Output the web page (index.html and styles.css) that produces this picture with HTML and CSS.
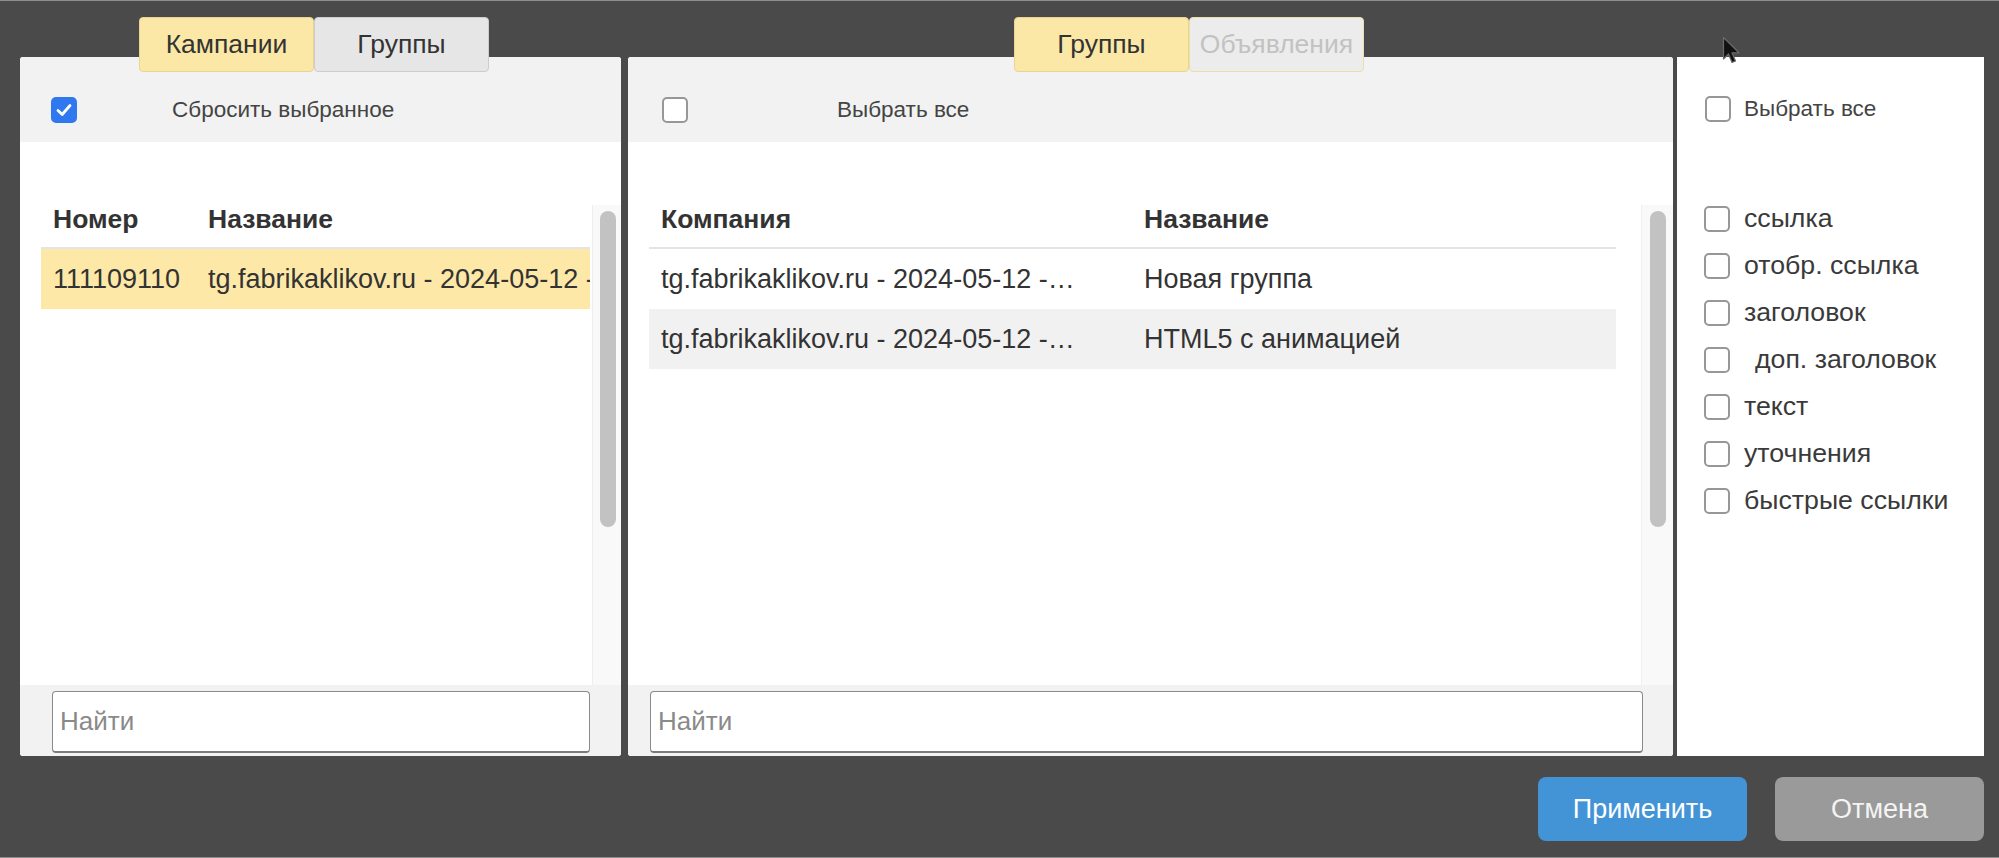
FILE: index.html
```html
<!DOCTYPE html>
<html lang="ru">
<head>
<meta charset="utf-8">
<title>Выбор объявлений</title>
<link rel="stylesheet" href="styles.css">
</head>
<body>
<div class="screen">
  <div class="columns">
    <section class="col col-left">
      <div class="tabs tabs-left">
        <div class="tab tab-active">Кампании</div>
        <div class="tab tab-idle">Группы</div>
      </div>
      <div class="panel">
        <div class="panel-head head-left">
          <span class="cb cb-checked"><svg width="18" height="18" viewBox="0 0 18 18"><path d="M3 9.5 L7.2 13.5 L15 4.5" fill="none" stroke="#fff" stroke-width="2.8" stroke-linecap="round" stroke-linejoin="round"/></svg></span>
          <span class="head-label">Сбросить выбранное</span>
        </div>
        <div class="panel-body">
          <div class="scroll-area">
            <div class="table-wrap tw-left">
              <div class="trow thead"><div class="cell c-num">Номер</div><div class="cell c-name">Название</div></div>
              <div class="trow tr row-sel"><div class="cell c-num">111109110</div><div class="cell c-name">tg.fabrikaklikov.ru - 2024-05-12 -</div></div>
            </div>
            <div class="scrollbar sb-left"><div class="thumb"></div></div>
          </div>
          <div class="search-bar search-left"><input class="search" type="text" placeholder="Найти"></div>
        </div>
      </div>
    </section>

    <section class="col col-mid">
      <div class="tabs tabs-mid">
        <div class="tab tab-active">Группы</div>
        <div class="tab tab-disabled">Объявления</div>
      </div>
      <div class="panel">
        <div class="panel-head head-mid">
          <span class="cb"></span>
          <span class="head-label">Выбрать все</span>
        </div>
        <div class="panel-body">
          <div class="scroll-area">
            <div class="table-wrap tw-mid">
              <div class="trow thead"><div class="cell c-company">Компания</div><div class="cell c-name">Название</div></div>
              <div class="trow tr"><div class="cell c-company">tg.fabrikaklikov.ru - 2024-05-12 -…</div><div class="cell c-name">Новая группа</div></div>
              <div class="trow tr row-hover"><div class="cell c-company">tg.fabrikaklikov.ru - 2024-05-12 -…</div><div class="cell c-name">HTML5 с анимацией</div></div>
            </div>
            <div class="scrollbar sb-mid"><div class="thumb"></div></div>
          </div>
          <div class="search-bar search-mid"><input class="search" type="text" placeholder="Найти"></div>
        </div>
      </div>
    </section>

    <section class="col col-right">
      <div class="panel-right">
        <div class="select-all"><span class="cb"></span><span class="sa-label">Выбрать все</span></div>
        <ul class="opt-list">
          <li class="opt"><span class="cb"></span><span class="opt-label">ссылка</span></li>
          <li class="opt"><span class="cb"></span><span class="opt-label">отобр. ссылка</span></li>
          <li class="opt"><span class="cb"></span><span class="opt-label">заголовок</span></li>
          <li class="opt"><span class="cb"></span><span class="opt-label indent">доп. заголовок</span></li>
          <li class="opt"><span class="cb"></span><span class="opt-label">текст</span></li>
          <li class="opt"><span class="cb"></span><span class="opt-label">уточнения</span></li>
          <li class="opt"><span class="cb"></span><span class="opt-label">быстрые ссылки</span></li>
        </ul>
      </div>
    </section>
  </div>

  <div class="actions">
    <button class="btn btn-primary" type="button">Применить</button>
    <button class="btn btn-cancel" type="button">Отмена</button>
  </div>

  <svg class="cursor" width="20" height="30" viewBox="0 0 20 30"><path d="M1.5 1.5 L1.5 23 L6.5 18 L10 26.5 L13.5 25 L10 16.8 L17 16.8 Z" fill="#111" stroke="#6a6a6a" stroke-width="1.2" stroke-linejoin="round"/></svg>
</div>
</body>
</html>
```

FILE: styles.css
```css
* { box-sizing: border-box; }
html, body { margin: 0; height: 858px; }
body {
  background: #4a4a4a;
  font-family: "Liberation Sans", Arial, sans-serif;
  color: #333;
  overflow: hidden;
}
.screen {
  position: relative;
  height: 858px;
  border-top: 1px solid #8e8e8e;
  border-bottom: 1px solid #8e8e8e;
  padding: 16px 15px 0 20px;
  display: flex;
  flex-direction: column;
}
.columns { display: flex; align-items: flex-start; }
.col { display: flex; flex-direction: column; }
.col-left { width: 601px; }
.col-mid { width: 1045px; margin-left: 7px; }
.col-right { width: 307px; margin-left: 4px; padding-top: 40px; }

.tabs { display: flex; height: 55px; margin-bottom: -15px; position: relative; z-index: 1; }
.tabs-left { padding-left: 119px; }
.tabs-mid { padding-left: 386px; }
.tab {
  width: 175px; height: 55px;
  display: flex; align-items: center; justify-content: center;
  font-size: 26.5px; color: #333;
  border: 1px solid #cfcfcf; border-radius: 4px;
}
.tab-active { background: #fce8a6; border-color: #e8d593; }
.tab-idle { background: #e6e6e6; border-color: #cdcdcd; }
.tab-disabled { background: #ececec; border-color: #ebdfa9; color: #c2c2c2; }

.panel {
  height: 699px; background: #fff; border-radius: 3px; overflow: hidden;
  display: flex; flex-direction: column;
}
.panel-head {
  height: 85px; flex: none; background: #f2f2f2;
  display: flex; align-items: center; padding-top: 20px;
}
.head-left { padding-left: 31px; }
.head-left .head-label { margin-left: 95px; }
.head-mid { padding-left: 34px; }
.head-mid .head-label { margin-left: 149px; }
.head-label { font-size: 22.5px; color: #444; }

.cb {
  width: 26px; height: 26px; flex: none;
  border: 2px solid #979797; border-radius: 5px; background: #fff;
  display: flex; align-items: center; justify-content: center;
}
.cb-checked { background: #2f78f0; border-color: #2f78f0; }

.panel-body { flex: 1; min-height: 0; display: flex; flex-direction: column; padding-top: 63px; }
.scroll-area { flex: 1; min-height: 0; display: flex; padding-left: 21px; }
.table-wrap { flex: 1; min-width: 0; overflow: hidden; }
.tw-left { margin-right: 2px; }
.tw-mid { margin-right: 25px; }
.trow { display: flex; white-space: nowrap; }
.thead {
  font-weight: bold; font-size: 26.5px; line-height: 28px;
  padding-bottom: 14px; border-bottom: 2px solid #e4e4e4; color: #333;
}
.tr { height: 60px; align-items: center; font-size: 27px; color: #333; }
.cell { padding-left: 12px; flex: none; }
.c-num { width: 155px; }
.c-company { width: 483px; }
.c-name { flex: 1; min-width: 0; overflow: hidden; }
.row-sel { background: #fde8a7; }
.row-hover { background: #f1f1f1; }

.scrollbar { flex: none; background: #f9f9f9; border-left: 1px solid #eeeeee; padding-top: 6px; }
.sb-left { width: 29px; padding-left: 7px; }
.sb-mid { width: 32px; padding-left: 8px; }
.thumb { width: 16px; height: 316px; border-radius: 8px; background: #c2c2c2; }

.search-bar { height: 71px; flex: none; background: #f2f2f2; padding-top: 6px; }
.search-left { padding-left: 32px; padding-right: 31px; }
.search-mid { padding-left: 22px; padding-right: 30px; }
.search {
  display: block; width: 100%; height: 62px;
  border: 1px solid #8a8a8a; border-bottom: 2px solid #7a7a7a; border-radius: 4px;
  background: #fff; padding: 0 7px;
  font-family: "Liberation Sans", Arial, sans-serif; font-size: 26px; color: #333;
}
.search::placeholder { color: #8a8a8a; }

.panel-right { height: 699px; background: #fff; padding: 32px 0 0 27px; }
.select-all { display: flex; align-items: center; height: 40px; padding-left: 1px; }
.sa-label { margin-left: 13px; font-size: 22.5px; color: #444; }
.opt-list { list-style: none; margin: 66px 0 0; padding: 0; }
.opt { height: 47px; display: flex; align-items: center; font-size: 26.7px; color: #3a3a3a; }
.opt-label { margin-left: 14px; }
.indent { padding-left: 11px; }

.actions { display: flex; justify-content: flex-end; gap: 28px; margin-top: 21px; }
.btn {
  width: 209px; height: 64px; border: none; border-radius: 8px;
  display: flex; align-items: center; justify-content: center;
  font-family: "Liberation Sans", Arial, sans-serif; font-size: 27px; color: #fff;
}
.btn-primary { background: #4394d6; }
.btn-cancel { background: #9a9a9a; color: #f4f4f4; }

.cursor { position: absolute; left: 1722px; top: 35px; }
```
